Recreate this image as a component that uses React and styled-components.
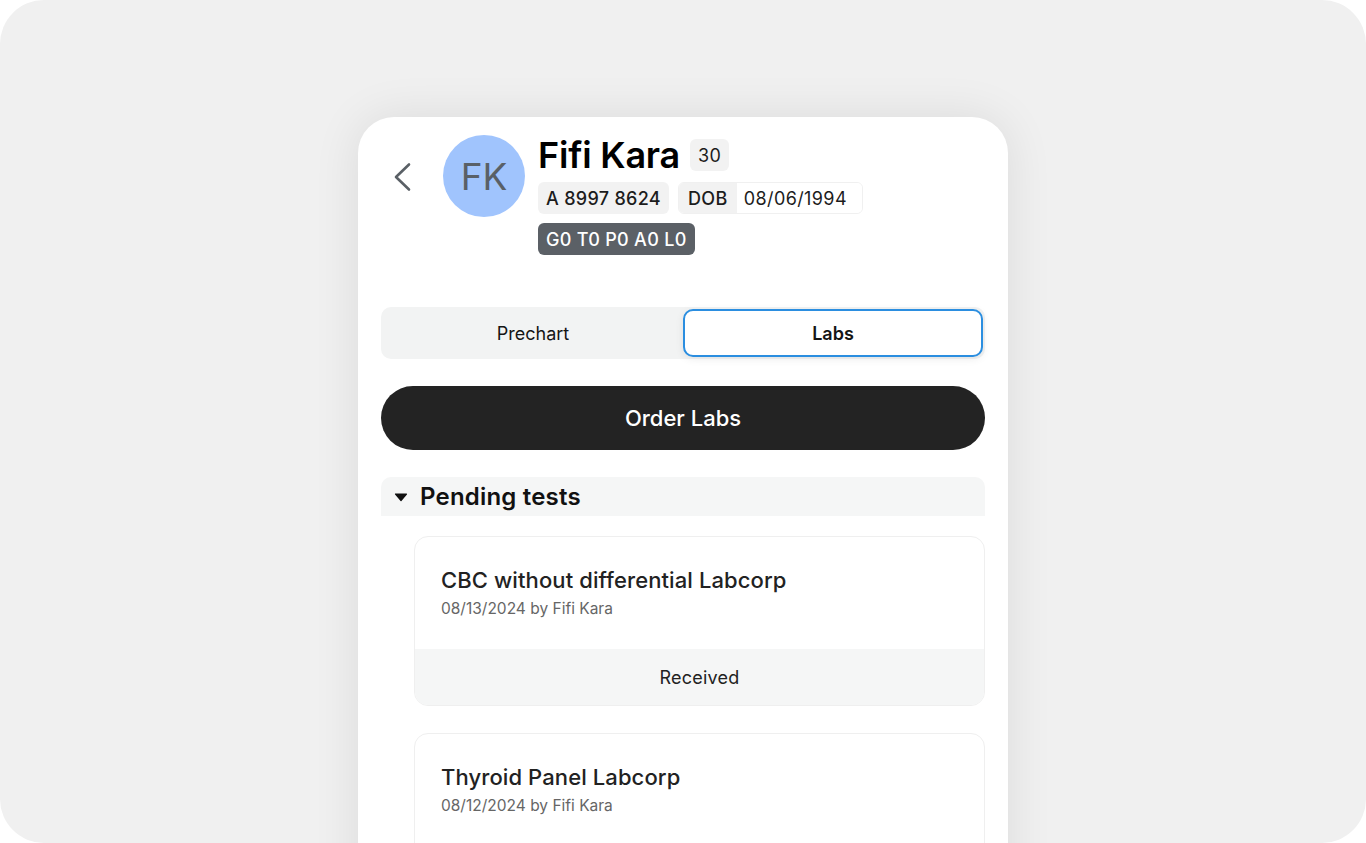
import styled, { createGlobalStyle } from "styled-components";

const Global = createGlobalStyle`
  html, body {
    margin: 0;
    padding: 0;
    background: #ffffff;
  }
  body {
    font-family: "Inter", "Noto Sans", sans-serif;
    -webkit-font-smoothing: antialiased;
  }
  * { box-sizing: border-box; }
`;

const tests = [
  { name: "CBC without differential Labcorp", date: "08/13/2024", by: "Fifi Kara", status: "Received" },
  { name: "Thyroid Panel Labcorp", date: "08/12/2024", by: "Fifi Kara", status: "Received" },
];

export default function App() {
  return (
    <>
      <Global />
      <Frame>
        <Phone>
          <Header>
            <BackBtn aria-label="back">
              <svg width="20" height="30" viewBox="0 0 20 30" fill="none">
                <polyline
                  points="16,2.5 3,15 16,27.5"
                  stroke="#5a6066"
                  strokeWidth="2.6"
                  strokeLinecap="round"
                  strokeLinejoin="round"
                />
              </svg>
            </BackBtn>
            <Avatar>FK</Avatar>
            <Info>
              <NameRow>
                <Name>Fifi Kara</Name>
                <Chip>30</Chip>
              </NameRow>
              <ChipRow>
                <Chip $bold>A 8997 8624</Chip>
                <Dob>
                  <span className="label">DOB</span>
                  <span className="value">08/06/1994</span>
                </Dob>
              </ChipRow>
              <ChipRow>
                <Chip $dark>G0 T0 P0 A0 L0</Chip>
              </ChipRow>
            </Info>
          </Header>

          <Tabs>
            <Tab>Prechart</Tab>
            <Tab $active>Labs</Tab>
          </Tabs>

          <OrderButton>Order Labs</OrderButton>

          <SectionHead>
            <svg width="14" height="10" viewBox="0 0 14 10">
              <path d="M1.5 2h11L7 8.5z" fill="#111" strokeLinejoin="round" stroke="#111" strokeWidth="1.2" />
            </svg>
            Pending tests
          </SectionHead>

          <List>
            {tests.map((t) => (
              <TestCard key={t.name}>
                <TestBody>
                  <TestName>{t.name}</TestName>
                  <TestMeta>
                    {t.date} by {t.by}
                  </TestMeta>
                </TestBody>
                <TestStatus>{t.status}</TestStatus>
              </TestCard>
            ))}
          </List>
        </Phone>
      </Frame>
    </>
  );
}

const Frame = styled.div`
  height: 100vh;
  width: 100vw;
  background: #f0f0f0;
  border-radius: 44px;
  overflow: hidden;
  display: flex;
  justify-content: center;
  padding-top: 117px;
`;

const Phone = styled.div`
  width: 650px;
  min-height: 900px;
  background: #ffffff;
  border-radius: 36px 36px 0 0;
  box-shadow: 0 0 48px rgba(0, 0, 0, 0.09);
  padding: 18px 23px 0;
  flex-shrink: 0;
`;

const Header = styled.div`
  display: flex;
  align-items: flex-start;
  padding-left: 12px;
`;

const BackBtn = styled.button`
  border: none;
  background: none;
  padding: 0;
  margin-top: 27px;
  width: 20px;
  height: 30px;
  cursor: pointer;
`;

const Avatar = styled.div`
  width: 82px;
  height: 82px;
  border-radius: 50%;
  background: #a0c4fd;
  color: #596067;
  font-size: 37px;
  display: flex;
  align-items: center;
  justify-content: center;
  margin-left: 30px;
  flex-shrink: 0;
`;

const Info = styled.div`
  margin-left: 13px;
  display: flex;
  flex-direction: column;
  gap: 9px;
`;

const NameRow = styled.div`
  display: flex;
  align-items: center;
  gap: 10px;
  margin-bottom: -2px;
`;

const Name = styled.h1`
  margin: 0;
  font-size: 36px;
  line-height: 40px;
  font-weight: 600;
  color: #000;
  letter-spacing: -0.2px;
`;

const ChipRow = styled.div`
  display: flex;
  gap: 9px;
`;

const Chip = styled.span`
  display: inline-flex;
  align-items: center;
  height: 32px;
  padding: 0 8px;
  border-radius: 6px;
  font-size: 18px;
  letter-spacing: 0.3px;
  font-weight: ${(p) => (p.$bold || p.$dark ? 500 : 400)};
  background: ${(p) => (p.$dark ? "#5b6066" : "#f2f2f2")};
  color: ${(p) => (p.$dark ? "#ffffff" : "#1c1c1c")};
`;

const Dob = styled.span`
  display: inline-flex;
  height: 32px;
  border-radius: 6px;
  border: 1.5px solid #f0f0f0;
  overflow: hidden;
  font-size: 18px;
  letter-spacing: 0.4px;
  color: #1c1c1c;

  .label {
    display: flex;
    align-items: center;
    padding: 0 9px;
    background: #f2f2f2;
    font-weight: 500;
  }
  .value {
    display: flex;
    align-items: center;
    padding: 0 15px 0 7px;
    background: #fff;
  }
`;

const Tabs = styled.div`
  margin-top: 52px;
  display: grid;
  grid-template-columns: 1fr 1fr;
  background: #f2f3f3;
  border-radius: 10px;
  padding: 2px;
  height: 52px;
`;

const Tab = styled.button`
  border-radius: 10px;
  font-family: inherit;
  font-size: 18px;
  color: #151515;
  cursor: pointer;
  font-weight: ${(p) => (p.$active ? 600 : 400)};
  background: ${(p) => (p.$active ? "#ffffff" : "transparent")};
  border: ${(p) => (p.$active ? "2px solid #2b8ee0" : "2px solid transparent")};
  box-shadow: ${(p) => (p.$active ? "0 2px 8px rgba(0,0,0,0.08)" : "none")};
`;

const OrderButton = styled.button`
  margin-top: 27px;
  width: 100%;
  height: 64px;
  border: none;
  border-radius: 32px;
  background: #232323;
  color: #ffffff;
  font-family: inherit;
  font-size: 22px;
  font-weight: 500;
  cursor: pointer;
`;

const SectionHead = styled.div`
  margin-top: 27px;
  height: 39px;
  background: #f5f6f6;
  border-radius: 10px 10px 0 0;
  display: flex;
  align-items: center;
  gap: 12px;
  padding-left: 13px;
  font-size: 24px;
  font-weight: 600;
  color: #111;
  letter-spacing: 0.2px;
`;

const List = styled.div`
  display: flex;
  flex-direction: column;
  gap: 27px;
  padding: 20px 0 0 33px;
`;

const TestCard = styled.div`
  border: 1.5px solid #efefef;
  border-radius: 14px;
  overflow: hidden;
  background: #fff;
`;

const TestBody = styled.div`
  padding: 29px 26px 0;
  height: 112px;
`;

const TestName = styled.div`
  font-size: 22px;
  font-weight: 500;
  color: #222;
  line-height: 28px;
  letter-spacing: 0.1px;
`;

const TestMeta = styled.div`
  margin-top: 5px;
  font-size: 15.5px;
  color: #666;
`;

const TestStatus = styled.div`
  height: 56px;
  background: #f5f6f6;
  display: flex;
  align-items: center;
  justify-content: center;
  font-size: 18px;
  letter-spacing: 0.2px;
  color: #222;
`;
